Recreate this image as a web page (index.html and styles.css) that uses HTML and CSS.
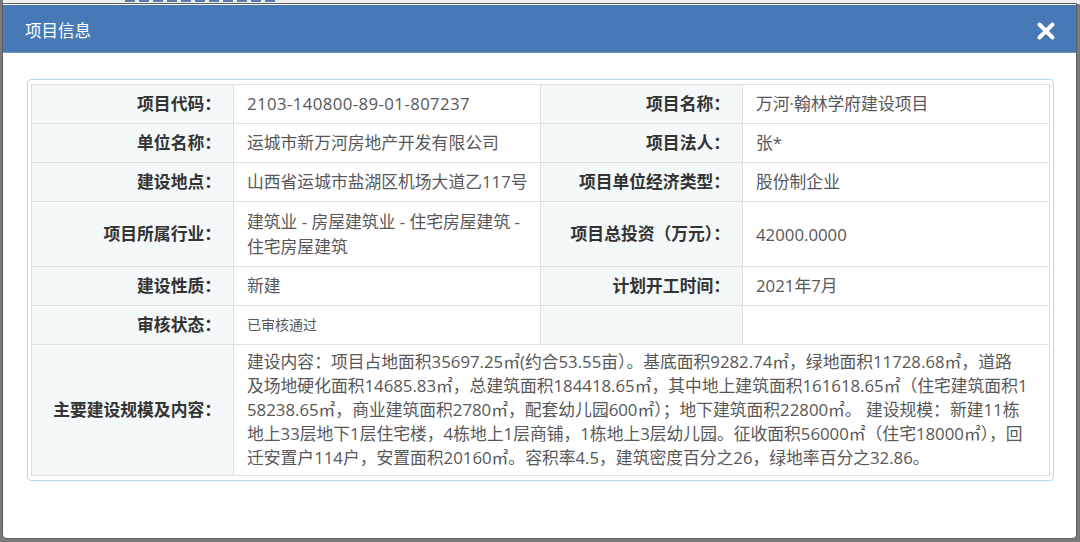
FILE: index.html
```html
<!DOCTYPE html>
<html lang="zh-CN">
<head>
<meta charset="utf-8">
<title>项目信息</title>
<link rel="stylesheet" href="styles.css">
</head>
<body>
<div class="backdrop-top"><span class="behind-mark"></span><span class="behind-mark short"></span></div>
<div class="modal">
  <div class="modal-header">
    <span class="modal-title">项目信息</span>
    <span class="modal-close" aria-label="关闭">
      <svg width="20" height="20" viewBox="0 0 20 20"><path d="M3.5 3.5 L16.5 16.5 M16.5 3.5 L3.5 16.5" stroke="#fff" stroke-width="4" stroke-linecap="round" fill="none"/></svg>
    </span>
  </div>
  <div class="modal-body">
    <div class="panel">
      <table class="info">
        <colgroup><col class="c-label"><col class="c-value"><col class="c-label"><col class="c-value"></colgroup>
        <tr>
          <th>项目代码：</th><td class="code">2103-140800-89-01-807237</td>
          <th>项目名称：</th><td>万河·翰林学府建设项目</td>
        </tr>
        <tr>
          <th>单位名称：</th><td>运城市新万河房地产开发有限公司</td>
          <th>项目法人：</th><td>张*</td>
        </tr>
        <tr>
          <th>建设地点：</th><td>山西省运城市盐湖区机场大道乙117号</td>
          <th>项目单位经济类型：</th><td>股份制企业</td>
        </tr>
        <tr class="tall">
          <th>项目所属行业：</th><td>建筑业 - 房屋建筑业 - 住宅房屋建筑 - 住宅房屋建筑</td>
          <th>项目总投资（万元）：</th><td>42000.0000</td>
        </tr>
        <tr>
          <th>建设性质：</th><td>新建</td>
          <th>计划开工时间：</th><td>2021年7月</td>
        </tr>
        <tr>
          <th>审核状态：</th><td class="small">已审核通过</td>
          <th></th><td></td>
        </tr>
        <tr>
          <th>主要建设规模及内容：</th>
          <td colspan="3" class="para">建设内容：项目占地面积35697.25㎡(约合53.55亩）。基底面积9282.74㎡，绿地面积11728.68㎡，道路<br>及场地硬化面积14685.83㎡，总建筑面积184418.65㎡，其中地上建筑面积161618.65㎡（住宅建筑面积1<br>58238.65㎡，商业建筑面积2780㎡，配套幼儿园600㎡）；地下建筑面积22800㎡。 建设规模：新建11栋<br>地上33层地下1层住宅楼，4栋地上1层商铺，1栋地上3层幼儿园。征收面积56000㎡（住宅18000㎡），回<br>迁安置户114户，安置面积20160㎡。容积率4.5，建筑密度百分之26，绿地率百分之32.86。</td>
        </tr>
      </table>
    </div>
  </div>
</div>
</body>
</html>
```
FILE: styles.css
```css
html, body {
  margin: 0;
  padding: 0;
}
body {
  width: 1080px;
  height: 542px;
  overflow: hidden;
  background: #7a7a7a;
  font-family: "Open Sans", "Noto Sans CJK SC", sans-serif;
}
.backdrop-top {
  height: 4px;
  margin-left: 3px;
  background: #eceef0;
  overflow: hidden;
  display: flex;
  align-items: flex-start;
  gap: 6px;
  padding-left: 122px;
}
.behind-mark {
  display: block;
  width: 150px;
  height: 2px;
  background: repeating-linear-gradient(90deg, #3a5c98 0 10px, transparent 10px 14px);
  opacity: 0.8;
}
.behind-mark.short {
  width: 0;
}
.modal {
  margin-left: 3px;
  width: 1073px;
  height: 534px;
  background: #fff;
  border-radius: 0 0 4px 4px;
  box-shadow: 0 0 0 1px #5e5e5e;
  overflow: hidden;
}
.modal-header {
  height: 48px;
  margin-top: 1px;
  background: #4779b7;
  border-bottom: 1px solid #6b93c6;
  box-sizing: border-box;
  display: flex;
  align-items: center;
  justify-content: space-between;
  padding: 4px 20px 0 22px;
}
.modal-title {
  color: #fff;
  font-size: 16.5px;
  line-height: 20px;
}
.modal-close {
  display: flex;
  width: 20px;
  height: 20px;
}
.modal-body {
  padding: 26px 22px 0 24px;
}
.panel {
  width: 1027px;
  box-sizing: border-box;
  border: 1px solid #b3daf4;
  border-radius: 4px;
  padding: 4px 4px 4px 3px;
}
.info {
  width: 1018px;
  table-layout: fixed;
  border-collapse: collapse;
  border: 1px solid #dcdcdc;
}
.c-label { width: 202px; }
.c-value { width: 307px; }
.info th, .info td {
  border: 1px solid #e0e0e0;
  padding: 7px 12px;
  line-height: 24px;
  font-size: 16.8px;
  vertical-align: middle;
}
.info th {
  background: #f3f8f8;
  color: #333;
  font-weight: bold;
  text-align: right;
  padding-right: 12px;
  white-space: nowrap;
}
.info td {
  background: #fff;
  color: #585858;
  text-align: left;
  padding-left: 13px;
}
.info td.code {
  letter-spacing: 0.4px;
}
.info td.small {
  font-size: 14px;
}
.info tr.tall td {
  line-height: 25px;
}
.info td.para {
  white-space: nowrap;
  line-height: 24px;
  padding-top: 5px;
  padding-bottom: 5px;
}
```
